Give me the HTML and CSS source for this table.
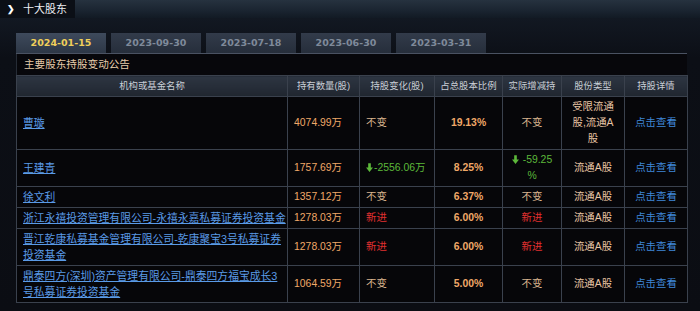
FILE: index.html
```html
<!DOCTYPE html>
<html lang="zh">
<head>
<meta charset="utf-8">
<link rel="stylesheet" href="styles.css">
</head>
<body>
<div class="topbar">
  <div class="title"><span class="chev">&#x276F;</span>十大股东</div>
</div>
<div class="main">
  <div class="tabs">
    <div class="tab active">2024-01-15</div>
    <div class="tab">2023-09-30</div>
    <div class="tab">2023-07-18</div>
    <div class="tab">2023-06-30</div>
    <div class="tab">2023-03-31</div>
  </div>
  <div class="panel">
    <div class="caption">主要股东持股变动公告</div>
    <table class="grid">
      <colgroup>
        <col class="c-name"><col class="c-qty"><col class="c-chg"><col class="c-pct"><col class="c-real"><col class="c-type"><col class="c-det">
      </colgroup>
      <thead>
        <tr><th>机构或基金名称</th><th>持有数量(股)</th><th>持股变化(股)</th><th>占总股本比例</th><th>实际增减持</th><th>股份类型</th><th>持股详情</th></tr>
      </thead>
      <tbody>
        <tr>
          <td class="name"><a>曹璇</a></td>
          <td class="qty">4074.99万</td>
          <td class="chg same">不变</td>
          <td class="pct">19.13%</td>
          <td class="real same">不变</td>
          <td class="type">受限流通股,流通A股</td>
          <td class="det">点击查看</td>
        </tr>
        <tr>
          <td class="name"><a>王建青</a></td>
          <td class="qty">1757.69万</td>
          <td class="chg down"><svg class="arr" viewBox="0 0 8 10"><path d="M2.5 0h3v5h2.5L4 10 0 5h2.5z"/></svg>-2556.06万</td>
          <td class="pct">8.25%</td>
          <td class="real down"><svg class="arr" viewBox="0 0 8 10"><path d="M2.5 0h3v5h2.5L4 10 0 5h2.5z"/></svg> -59.25<br>%</td>
          <td class="type">流通A股</td>
          <td class="det">点击查看</td>
        </tr>
        <tr>
          <td class="name"><a>徐文利</a></td>
          <td class="qty">1357.12万</td>
          <td class="chg same">不变</td>
          <td class="pct">6.37%</td>
          <td class="real same">不变</td>
          <td class="type">流通A股</td>
          <td class="det">点击查看</td>
        </tr>
        <tr>
          <td class="name"><a>浙江永禧投资管理有限公司-永禧永嘉私募证券投资基金</a></td>
          <td class="qty">1278.03万</td>
          <td class="chg new">新进</td>
          <td class="pct">6.00%</td>
          <td class="real new">新进</td>
          <td class="type">流通A股</td>
          <td class="det">点击查看</td>
        </tr>
        <tr>
          <td class="name"><a>晋江乾康私募基金管理有限公司-乾康聚宝3号私募证券投资基金</a></td>
          <td class="qty">1278.03万</td>
          <td class="chg new">新进</td>
          <td class="pct">6.00%</td>
          <td class="real new">新进</td>
          <td class="type">流通A股</td>
          <td class="det">点击查看</td>
        </tr>
        <tr>
          <td class="name"><a>鼎泰四方(深圳)资产管理有限公司-鼎泰四方福宝成长3号私募证券投资基金</a></td>
          <td class="qty">1064.59万</td>
          <td class="chg same">不变</td>
          <td class="pct">5.00%</td>
          <td class="real same">不变</td>
          <td class="type">流通A股</td>
          <td class="det">点击查看</td>
        </tr>
      </tbody>
    </table>
  </div>
</div>
</body>
</html>
```

FILE: styles.css
```css
html, body {
  margin: 0;
  padding: 0;
}
body {
  width: 700px;
  height: 311px;
  overflow: hidden;
  background: #0f131b;
  font-family: "Liberation Sans", "Noto Sans CJK SC", sans-serif;
  font-size: 10.4px;
  color: #d8c0a0;
}
.topbar {
  height: 18px;
  background: linear-gradient(#26323f, #1a2430 60%, #121a24);
  display: flex;
}
.title {
  width: 75px;
  background: #0b0f16;
  color: #eef0f4;
  font-size: 11px;
  line-height: 18px;
  display: flex;
  align-items: center;
  gap: 8px;
  padding-left: 7px;
  box-sizing: border-box;
}
.chev {
  font-size: 9px;
  font-weight: bold;
  color: #fff;
}
.main {
  background: linear-gradient(#121822, #0c0f16 40px, #0b0d13);
  height: 293px;
  padding: 15px 0 0 16px;
  box-sizing: border-box;
}
.tabs {
  display: flex;
  gap: 5px;
  height: 20px;
}
.tab {
  width: 90px;
  height: 20px;
  line-height: 20px;
  text-align: center;
  background: linear-gradient(#323b4a, #262e3b);
  color: #7f8a9a;
  font-family: "DejaVu Sans", sans-serif;
  font-size: 9.5px;
  font-weight: bold;
}
.tab.active {
  background: linear-gradient(#3e4a5c, #2d3746);
  color: #f0cf5a;
}
.panel {
  width: 671px;
  background: #060609;
  border-top: 1px solid #4a5262;
}
.caption {
  height: 21px;
  line-height: 21px;
  padding-left: 7px;
  color: #e6cba8;
  font-size: 10.6px;
  border-left: 1px solid #262c36;
  background: #07070b;
}
.grid {
  width: 671px;
  border-collapse: collapse;
  table-layout: fixed;
}
.c-name { width: 271px; }
.c-qty { width: 72px; }
.c-chg { width: 75px; }
.c-pct { width: 68px; }
.c-real { width: 59px; }
.c-type { width: 63px; }
.c-det { width: 63px; }
.grid th, .grid td {
  border: 1px solid #3a414d;
  padding: 2px 4px;
  line-height: 16px;
  vertical-align: middle;
  text-align: center;
}
.grid th {
  background: linear-gradient(#2d3542, #20262f);
  color: #c9ced6;
  font-weight: normal;
  font-size: 9.4px;
  padding: 2px 0;
  white-space: nowrap;
}
.grid td.name {
  text-align: left;
  padding-left: 6px;
  padding-right: 0;
  font-size: 10.8px;
}
.name a {
  color: #5a9ae6;
  text-decoration: underline;
}
.qty {
  text-align: right !important;
  padding-right: 17px !important;
  color: #f0a868;
}
.chg {
  text-align: left !important;
  padding-left: 6px !important;
}
.same { color: #d9b48e; }
.new { color: #e03030; }
.down { color: #5cb83a; }
.pct {
  color: #f0a868;
  font-weight: bold;
}
.grid td.type {
  color: #e8c4a4;
  padding-left: 7px;
  padding-right: 7px;
}
.det { color: #3f86d8; }
.arr {
  width: 7px;
  height: 9px;
  fill: #5cb83a;
  vertical-align: -1px;
  margin-right: 1px;
}
```
